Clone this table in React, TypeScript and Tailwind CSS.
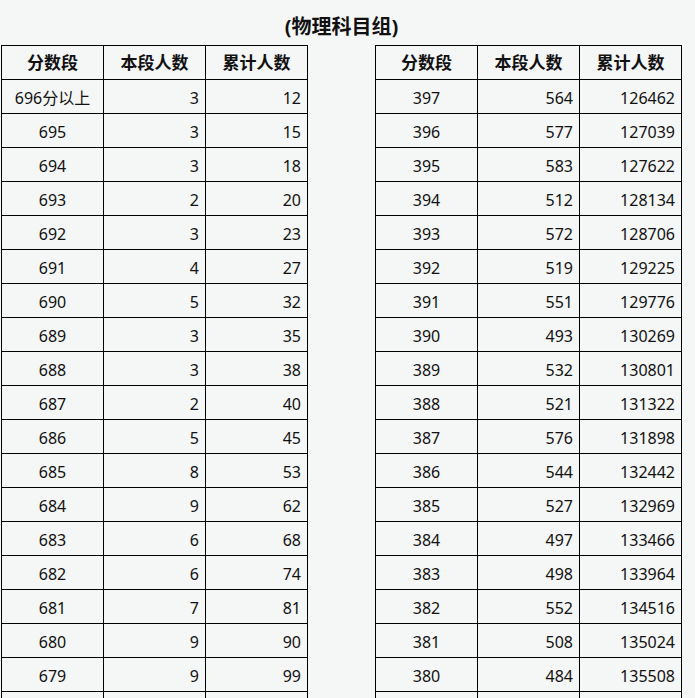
import React from "react";

type Row = [string, string, string];

const left: Row[] = [
  ["696分以上", "3", "12"],
  ["695", "3", "15"],
  ["694", "3", "18"],
  ["693", "2", "20"],
  ["692", "3", "23"],
  ["691", "4", "27"],
  ["690", "5", "32"],
  ["689", "3", "35"],
  ["688", "3", "38"],
  ["687", "2", "40"],
  ["686", "5", "45"],
  ["685", "8", "53"],
  ["684", "9", "62"],
  ["683", "6", "68"],
  ["682", "6", "74"],
  ["681", "7", "81"],
  ["680", "9", "90"],
  ["679", "9", "99"],
  ["", "", ""],
];

const right: Row[] = [
  ["397", "564", "126462"],
  ["396", "577", "127039"],
  ["395", "583", "127622"],
  ["394", "512", "128134"],
  ["393", "572", "128706"],
  ["392", "519", "129225"],
  ["391", "551", "129776"],
  ["390", "493", "130269"],
  ["389", "532", "130801"],
  ["388", "521", "131322"],
  ["387", "576", "131898"],
  ["386", "544", "132442"],
  ["385", "527", "132969"],
  ["384", "497", "133466"],
  ["383", "498", "133964"],
  ["382", "552", "134516"],
  ["381", "508", "135024"],
  ["380", "484", "135508"],
  ["", "", ""],
];

const headers = ["分数段", "本段人数", "累计人数"];

function ScoreTable({ rows }: { rows: Row[] }) {
  return (
    <div className="grid grid-cols-[102px_102px_102px] border-l border-t border-black w-[307px]">
      {headers.map((h) => (
        <div
          key={h}
          className="h-[34px] border-r border-b border-black flex items-center justify-center pt-[1px] font-bold text-[17px] text-[#111]"
        >
          {h}
        </div>
      ))}
      {rows.map((r, i) => (
        <React.Fragment key={i}>
          <div className="h-[34px] border-r border-b border-black flex items-center justify-center pt-[2px] text-[16px] text-[#111]">
            {r[0]}
          </div>
          <div className="h-[34px] border-r border-b border-black flex items-center justify-end pr-[6px] pt-[2px] text-[16px] text-[#111]">
            {r[1]}
          </div>
          <div className="h-[34px] border-r border-b border-black flex items-center justify-end pr-[6px] pt-[2px] text-[16px] text-[#111]">
            {r[2]}
          </div>
        </React.Fragment>
      ))}
    </div>
  );
}

export default function App() {
  return (
    <div
      className="min-h-screen bg-[#f5f6f6] overflow-hidden"
      style={{ fontFamily: '"Noto Sans", "Noto Sans CJK SC", sans-serif' }}
    >
      <div className="ml-[1px] w-[681px]">
        <div className="pt-[12px] h-[45px] text-center font-bold text-[20px] leading-[30px] text-[#111]">
          (物理科目组)
        </div>
        <div className="flex gap-[67px]">
          <ScoreTable rows={left} />
          <ScoreTable rows={right} />
        </div>
      </div>
    </div>
  );
}
